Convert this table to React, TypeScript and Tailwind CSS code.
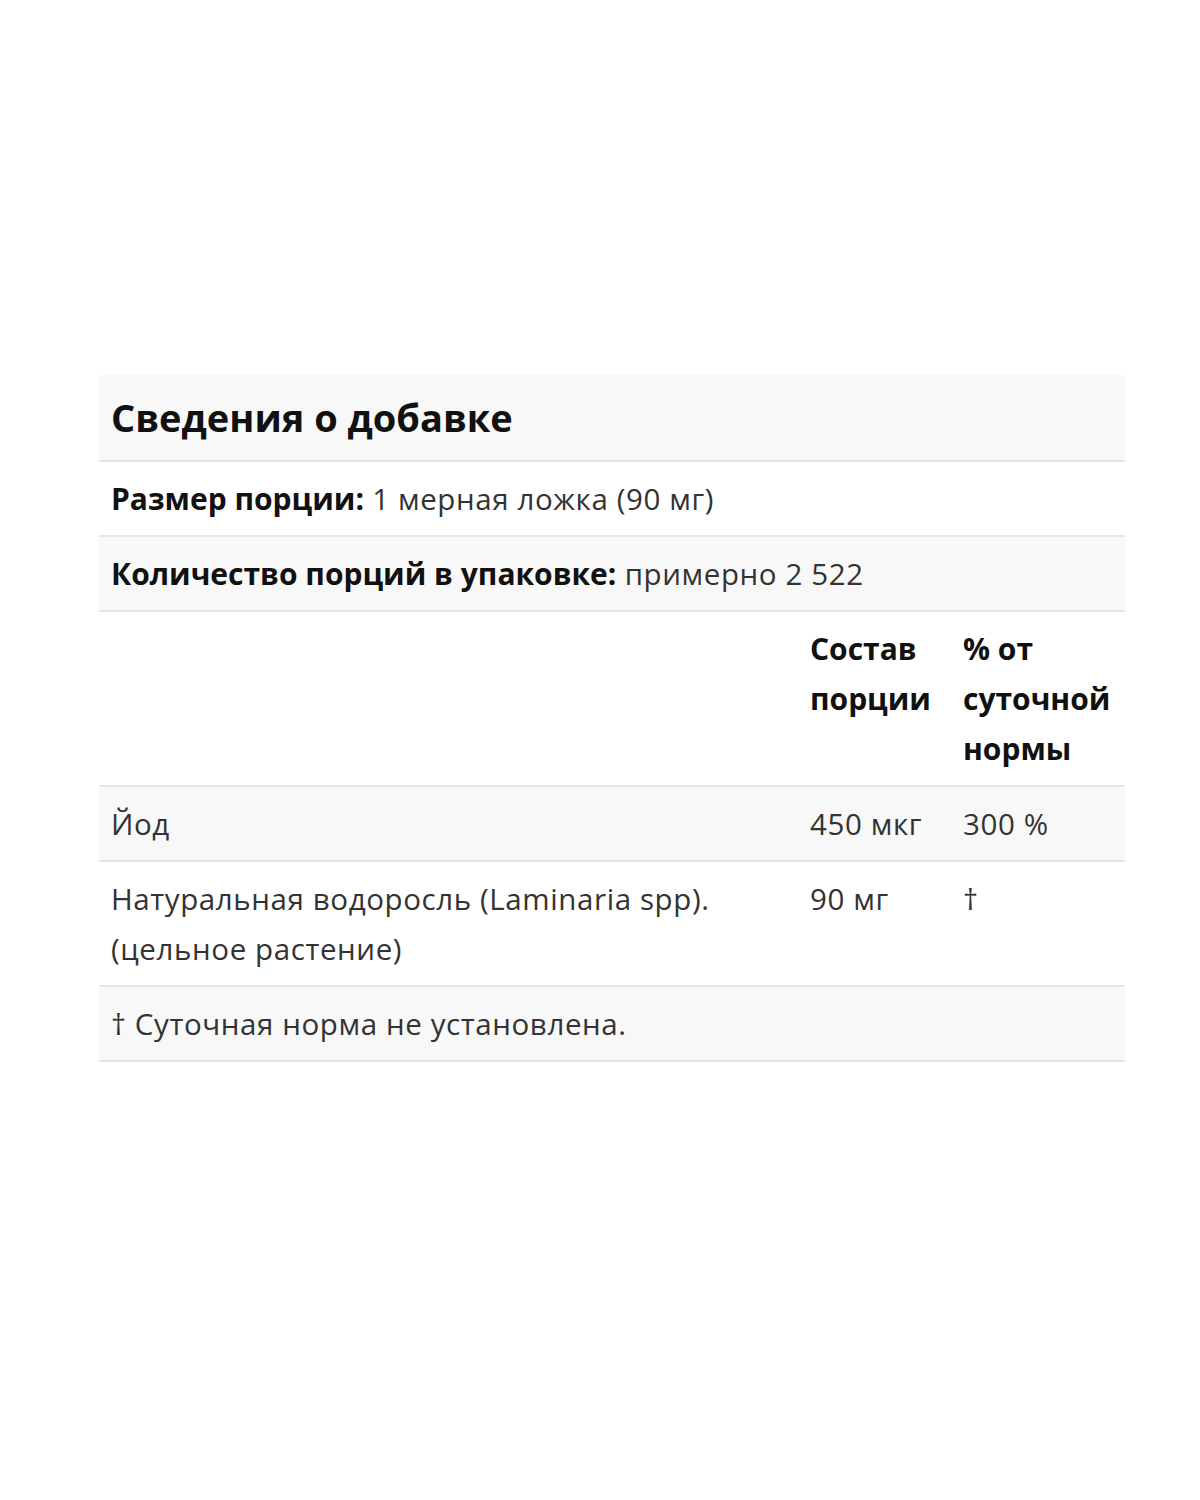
import React from "react";

const rowBase = "border-b-2 border-[#e6e6e6] px-[12px] pt-[12px] pb-[11px] leading-[50px]";
const bold = "font-bold text-[#111] text-[30px] tracking-[0px]";

export default function App() {
  return (
    <div className="w-[1200px] h-[1500px] bg-white pt-[375px] pl-[99px]" style={{ fontFamily: "'Open Sans', 'Liberation Sans', sans-serif" }}>
      <div className="w-[1026px] text-[#333] text-[29.5px] tracking-[0.6px]">
        <div className="bg-[#f8f8f8] border-b-2 border-[#e6e6e6] px-[12px] h-[87px] flex items-center">
          <h2 className="font-bold text-[38px] text-[#111] tracking-[0px]">Сведения о добавке</h2>
        </div>
        <div className={`${rowBase} bg-white`}>
          <span className={bold}>Размер порции:</span> 1 мерная ложка (90 мг)
        </div>
        <div className={`${rowBase} bg-[#f8f8f8]`}>
          <span className={bold}>Количество порций в упаковке:</span> примерно 2 522
        </div>
        <div className={`${rowBase} bg-white grid grid-cols-[699px_153px_1fr]`}>
          <div></div>
          <div className={bold}>Состав порции</div>
          <div className={bold}>% от суточной нормы</div>
        </div>
        <div className={`${rowBase} bg-[#f8f8f8] grid grid-cols-[699px_153px_1fr]`}>
          <div>Йод</div>
          <div>450 мкг</div>
          <div>300 %</div>
        </div>
        <div className={`${rowBase} bg-white grid grid-cols-[699px_153px_1fr]`}>
          <div>Натуральная водоросль (Laminaria spp). (цельное растение)</div>
          <div>90 мг</div>
          <div>†</div>
        </div>
        <div className={`${rowBase} bg-[#f8f8f8]`}>
          † Суточная норма не установлена.
        </div>
      </div>
    </div>
  );
}
